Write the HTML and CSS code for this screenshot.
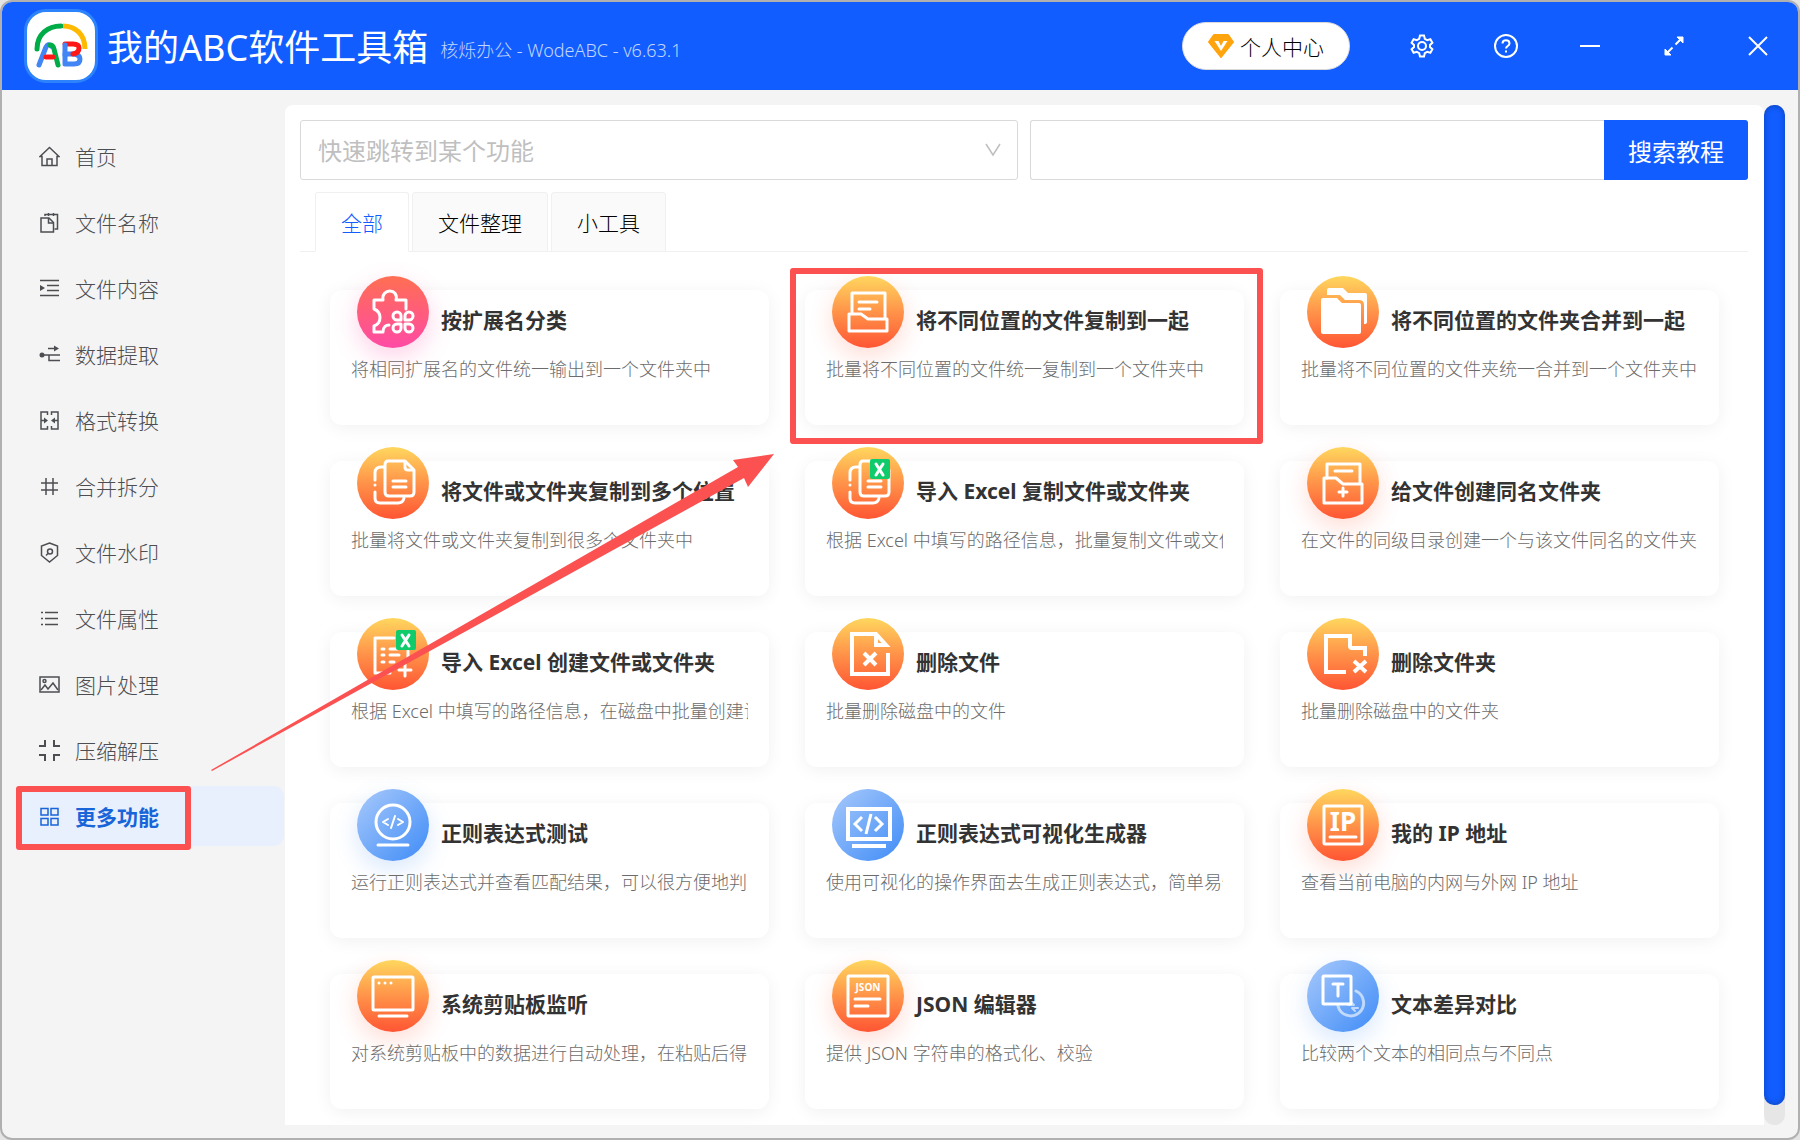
FILE: index.html
```html
<!DOCTYPE html>
<html lang="zh-CN">
<head>
    <meta charset="UTF-8">
    <meta name="viewport" content="width=device-width, initial-scale=1.0">
    <title>我的ABC软件工具箱</title>
    <link rel="stylesheet" href="styles.css">
</head>
<body>
<div class="window">
    <header class="titlebar">
        <div class="logo">
            <svg viewBox="0 0 68 68" fill="none" stroke-width="5" stroke-linecap="round" stroke-linejoin="round">
                <path d="M10 37C10 22 21 14 34 14" stroke="#00ac47"/>
                <path d="M36 14C48 14 58 22 58 37" stroke="#ffba00" stroke-linecap="butt"/>
                <path d="M12 53L19 35Q21 31 24 34" stroke="#4285f4"/>
                <path d="M23 33Q26 33 27 37L31 53" stroke="#00ac47"/>
                <path d="M19 45H26" stroke="#ff1717"/>
                <path d="M38 52V42L47 42Q53 43 53 47Q53 52 47 52Z" stroke="#4285f4"/>
                <path d="M38 32H46Q52 32 52 36Q52 41 46 42" stroke="#ff1717"/>
                <path d="M38 33V43" stroke="#4285f4"/>
            </svg>
        </div>
        <h1>我的ABC软件工具箱</h1>
        <span class="version">核烁办公 - WodeABC - v6.63.1</span>
        <button class="user-btn" type="button">
            <svg viewBox="0 0 26 24"><path d="M6 1H20L25 8L13 23L1 8Z" fill="#ffa40d" stroke="#ffa40d" stroke-width="2" stroke-linejoin="round"/><path d="M6.500 7H10.500L13 12L15.500 7H19.500L13 17Z" fill="#fff"/></svg>
            个人中心
        </button>
        <div class="window-btns">
            <button type="button" aria-label="设置">
                <svg viewBox="0 0 24 24"><path d="M10 1.500H14L14.800 4.800L17.200 6.200L20.400 5.200L22.400 8.700L20 11V13L22.400 15.300L20.400 18.800L17.200 17.800L14.800 19.200L14 22.500H10L9.200 19.200L6.800 17.800L3.600 18.800L1.600 15.300L4 13V11L1.600 8.700L3.600 5.200L6.800 6.200L9.200 4.800Z"/><circle cx="12" cy="12" r="4"/></svg>
            </button>
            <button type="button" aria-label="帮助">
                <svg viewBox="0 0 24 24"><circle cx="12" cy="12" r="11"/><path d="M8.500 9.500C8.500 5 15.500 5 15.500 9.500C15.500 12 12 12 12 14.500"/><path d="M12 16.500V18.500"/></svg>
            </button>
            <button type="button" aria-label="最小化">
                <svg viewBox="0 0 24 24"><path d="M2 12H22"/></svg>
            </button>
            <button type="button" aria-label="最大化">
                <svg viewBox="0 0 24 24"><path d="M13.500 10.500L19 5M10.500 13.500L5 19"/><path d="M15 3L21 3L21 9ZM3 15L3 21L9 21Z" fill="#fff" stroke-width="1"/></svg>
            </button>
            <button type="button" aria-label="关闭">
                <svg viewBox="0 0 24 24"><path d="M3 3L21 21M21 3L3 21"/></svg>
            </button>
        </div>
    </header>

    <div class="body">
        <nav class="sidebar">
            <a href="#"><svg viewBox="0 0 21 21"><path d="M1 10.500L10.500 1.500L20 10.500H18V19.500H3V10.500Z"/><path d="M8 19.500V13H13V19.500"/></svg>首页</a>
            <a href="#"><svg viewBox="0 0 21 21"><path d="M2 6H10L14.500 10.500V20H2Z"/><path d="M9.500 6V11H14.500"/><path d="M6 4V2.500H18.500V17H15.500M9.500 1V4M14.500 1V4"/></svg>文件名称</a>
            <a href="#"><svg viewBox="0 0 21 21"><path d="M1 2.500H20M8 7.500H20M8 12.500H20M1 17.500H20"/><path class="solid" d="M1 7L6 10L1 13Z"/></svg>文件内容</a>
            <a href="#"><svg viewBox="0 0 21 21"><path d="M9 4.500H17M3 11H21M10 11V16.500H21"/><circle class="solid" cx="3" cy="11" r="2.500"/><path class="solid" d="M15 1.500L20 4.500L15 7.500Z"/></svg>数据提取</a>
            <a href="#"><svg viewBox="0 0 21 21"><path d="M8.500 5V2H2V19H8.500V16M12.500 5V2H19V19H12.500V16M2 10.500H6M15 10.500H19"/><path class="solid" d="M5 7.500L9 10.500L5 13.500ZM16 7.500L12 10.500L16 13.500Z"/></svg>格式转换</a>
            <a href="#"><svg viewBox="0 0 21 21"><path d="M7 2V19M14 2V19M2 7H19M2 14H19"/></svg>合并拆分</a>
            <a href="#"><svg viewBox="0 0 21 21"><path d="M10.500 1L18.500 4V13.500L10.500 20L2.500 13.500V4Z"/><circle cx="11" cy="9.500" r="2.500"/><path d="M9 11.500L7 13.500"/></svg>文件水印</a>
            <a href="#"><svg viewBox="0 0 21 21"><path d="M6 4.500H19M6 10.500H19M6 16.500H19M2 4.500H4M2 10.500H4M2 16.500H4"/></svg>文件属性</a>
            <a href="#"><svg viewBox="0 0 21 21"><path d="M1 3H20V18H1Z"/><circle cx="5.500" cy="7" r="1.500"/><path d="M2 16L6 11L9 15L14 9L19 16"/></svg>图片处理</a>
            <a href="#"><svg class="thick" viewBox="0 0 21 21"><path d="M0 6H6V0M21 6H15V0M0 15H6V21M21 15H15V21"/></svg>压缩解压</a>
            <a href="#" class="active"><svg viewBox="0 0 21 21"><path d="M2 2.500H9V9H2ZM12 2.500H19V9H12ZM2 12.500H9V19H2ZM12 12.500H19V19H12Z"/></svg>更多功能<span class="mark"></span></a>
        </nav>

        <main class="panel">
            <div class="search-row">
                <div class="select-box">
                    <select aria-label="快速跳转到某个功能">
                        <option>快速跳转到某个功能</option>
                    </select>
                    <svg viewBox="0 0 16 16"><path d="M1 2L8 13L15 2"/></svg>
                </div>
                <form class="search-box">
                    <input type="text" aria-label="搜索教程">
                    <button type="button">搜索教程</button>
                </form>
            </div>

            <div class="tabs">
                <button type="button" class="tab current">全部</button>
                <button type="button" class="tab">文件整理</button>
                <button type="button" class="tab">小工具</button>
            </div>

            <div class="cards">
                <a href="#" class="card">
                    <div class="card-head">
                        <span class="icon pink glow"><svg viewBox="0 0 72 72"><path d="M49 33V24H39C42 12 24 12 26 24H17V33C25 36 25 47 17 50V56H26C26 51 29 49 32 49"/><path d="M44 44H40A4 4 0 1 1 44 40ZM48 44V40A4 4 0 1 1 52 44ZM44 48V52A4 4 0 1 1 40 48ZM48 48H52A4 4 0 1 1 48 52Z"/></svg></span>
                        <h3>按扩展名分类</h3>
                    </div>
                    <p>将相同扩展名的文件统一输出到一个文件夹中</p>
                </a>
                <a href="#" class="card">
                    <div class="card-head">
                        <span class="icon orange glow"><svg viewBox="0 0 72 72"><path d="M20 37V17H53V42"/><path d="M27 26H45M27 33H38"/><path d="M17 38H29L36 43H55V55H17Z"/></svg></span>
                        <h3>将不同位置的文件复制到一起</h3>
                    </div>
                    <p>批量将不同位置的文件统一复制到一个文件夹中</p>
                    <span class="mark"></span>
                </a>
                <a href="#" class="card">
                    <div class="card-head">
                        <span class="icon orange"><svg class="fill" viewBox="0 0 72 72"><path d="M20 19V14Q20 12 22 12H36L41 17H58Q60 17 60 19V46Q60 48 57 48V29Q57 24 52 24H38L33 19Z"/><path d="M16 22H30L35 27H52Q54 27 54 29V56Q54 58 52 58H16Q14 58 14 56V24Q14 22 16 22Z"/></svg></span>
                        <h3>将不同位置的文件夹合并到一起</h3>
                    </div>
                    <p>批量将不同位置的文件夹统一合并到一个文件夹中</p>
                </a>

                <a href="#" class="card">
                    <div class="card-head">
                        <span class="icon orange"><svg viewBox="0 0 72 72"><path d="M31 14H48L57 23V45Q57 49 53 49H32Q28 49 28 45V18Q28 14 31 14Z"/><path d="M48 15V20Q48 23 51 23H56"/><path d="M36 34H49M36 40H49"/><path d="M27 20H24Q18 20 18 26V33M18 38V38M18 45V51Q18 56 23 56H41Q46 56 47 51"/></svg></span>
                        <h3>将文件或文件夹复制到多个位置</h3>
                    </div>
                    <p>批量将文件或文件夹复制到很多个文件夹中</p>
                </a>
                <a href="#" class="card">
                    <div class="card-head">
                        <span class="icon orange"><svg viewBox="0 0 72 72"><path d="M31 14H48L57 23V45Q57 49 53 49H32Q28 49 28 45V18Q28 14 31 14Z"/><path d="M36 34H49M36 40H49"/><path d="M27 20H24Q18 20 18 26V33M18 38V38M18 45V51Q18 56 23 56H41Q46 56 47 51"/><rect class="excel" x="38" y="12" width="20" height="20" rx="2"/><path d="M44 17L51 28M51 17L44 28"/></svg></span>
                        <h3>导入 Excel 复制文件或文件夹</h3>
                    </div>
                    <p>根据 Excel 中填写的路径信息，批量复制文件或文件夹</p>
                </a>
                <a href="#" class="card">
                    <div class="card-head">
                        <span class="icon orange glow"><svg viewBox="0 0 72 72"><path d="M20 31V17H53V36"/><path d="M28 24H45"/><path d="M17 31H29L36 37H55V56H17Z"/><path d="M32 45H40M36 41V49"/></svg></span>
                        <h3>给文件创建同名文件夹</h3>
                    </div>
                    <p>在文件的同级目录创建一个与该文件同名的文件夹</p>
                </a>

                <a href="#" class="card">
                    <div class="card-head">
                        <span class="icon orange"><svg viewBox="0 0 72 72"><path d="M37 20H18V55H33M51 33V40"/><path d="M25 31H27M33 31H40M25 37H27M33 37H42M25 44H27M33 44H37"/><path d="M42 52H54M48 46V58"/><rect class="excel" x="39" y="12" width="20" height="20" rx="2"/><path d="M45 17L52 28M52 17L45 28"/></svg></span>
                        <h3>导入 Excel 创建文件或文件夹</h3>
                    </div>
                    <p>根据 Excel 中填写的路径信息，在磁盘中批量创建该文件</p>
                </a>
                <a href="#" class="card">
                    <div class="card-head">
                        <span class="icon orange"><svg class="sharp" viewBox="0 0 72 72"><path d="M56 35V56H20V16H44L54 27H44V17"/><path d="M32 35L44 47M44 35L32 47"/></svg></span>
                        <h3>删除文件</h3>
                    </div>
                    <p>批量删除磁盘中的文件</p>
                </a>
                <a href="#" class="card">
                    <div class="card-head">
                        <span class="icon orange"><svg class="sharp" viewBox="0 0 72 72"><path d="M39 54H19V18H43V28Q43 30 45 30H58V38"/><path d="M47 43L59 54M59 43L47 54"/></svg></span>
                        <h3>删除文件夹</h3>
                    </div>
                    <p>批量删除磁盘中的文件夹</p>
                </a>

                <a href="#" class="card">
                    <div class="card-head">
                        <span class="icon blue glow"><svg viewBox="0 0 72 72"><circle cx="36" cy="33" r="17"/><path class="thin" d="M31 30L26 33L31 36M41 30L46 33L41 36M38 27L34 39"/><path d="M21 56H51"/></svg></span>
                        <h3>正则表达式测试</h3>
                    </div>
                    <p>运行正则表达式并查看匹配结果，可以很方便地判断</p>
                </a>
                <a href="#" class="card">
                    <div class="card-head">
                        <span class="icon blue"><svg class="sharp" viewBox="0 0 72 72"><path d="M16 20H58V50H16Z"/><path class="medium" d="M30 28L23 35L30 42M43 28L50 35L43 42M39 25L34 45"/><path d="M20 57H54"/></svg></span>
                        <h3>正则表达式可视化生成器</h3>
                    </div>
                    <p>使用可视化的操作界面去生成正则表达式，简单易懂</p>
                </a>
                <a href="#" class="card">
                    <div class="card-head">
                        <span class="icon orange glow"><svg viewBox="0 0 72 72"><rect x="17" y="17" width="38" height="38" rx="1"/><text x="36" y="42" font-size="26">IP</text><path d="M23 48H49"/></svg></span>
                        <h3>我的 IP 地址</h3>
                    </div>
                    <p>查看当前电脑的内网与外网 IP 地址</p>
                </a>

                <a href="#" class="card">
                    <div class="card-head">
                        <span class="icon orange glow"><svg viewBox="0 0 72 72"><rect x="16" y="17" width="40" height="33" rx="1"/><path d="M22 23V23M28 23V23M34 23V23"/><path d="M22 56H50"/></svg></span>
                        <h3>系统剪贴板监听</h3>
                    </div>
                    <p>对系统剪贴板中的数据进行自动处理，在粘贴后得到</p>
                </a>
                <a href="#" class="card">
                    <div class="card-head">
                        <span class="icon orange glow"><svg viewBox="0 0 72 72"><rect x="16" y="16" width="40" height="40" rx="1"/><text x="36" y="31" font-size="10">JSON</text><path d="M23 39H48M23 46H36"/></svg></span>
                        <h3>JSON 编辑器</h3>
                    </div>
                    <p>提供 JSON 字符串的格式化、校验</p>
                </a>
                <a href="#" class="card">
                    <div class="card-head">
                        <span class="icon blue glow"><svg viewBox="0 0 72 72"><g class="pale"><path d="M49 31A13 13 0 1 1 31 46"/><path class="thin" d="M41 45H47L44 42M51 48H45L48 51"/></g><rect x="16" y="16" width="28" height="28" rx="1"/><path d="M26 24H36M31 24V36"/></svg></span>
                        <h3>文本差异对比</h3>
                    </div>
                    <p>比较两个文本的相同点与不同点</p>
                </a>
            </div>
        </main>

        <div class="scrollbar"><div class="thumb"></div></div>
    </div>

    <svg class="arrow" viewBox="0 0 566 318"><path d="M0 317L527 14L522 7L563 1L537 34L533 25L1 318Z"/></svg>
</div>
</body>
</html>
```

FILE: styles.css
```css
* {
    box-sizing: border-box;
}
body {
    margin: 0;
    background-color: #e4e4e4;
    font-family: "Noto Sans", "Noto Sans CJK SC", sans-serif;
    font-size: 21px;
    font-weight: 300;
    color: #222;
}
button, input, select {
    font-family: inherit;
    font-size: inherit;
    font-weight: inherit;
    margin: 0;
}
button {
    cursor: pointer;
}
a {
    color: inherit;
    text-decoration: none;
}
.window {
    position: relative;
    display: flex;
    flex-direction: column;
    min-height: 100vh;
    border: 2px solid #b0b0b0;
    border-radius: 12px;
    background-color: #f4f4f4;
    overflow: hidden;
}

/* title bar */
.titlebar {
    display: flex;
    align-items: center;
    height: 88px;
    padding: 0 28px 0 22px;
    background-color: #115dff;
    color: #fff;
}
.logo {
    width: 74px;
    height: 74px;
    border: 3px solid #2d83fb;
    border-radius: 22px;
    background-color: #fff;
}
.logo svg {
    display: block;
}
.titlebar h1 {
    margin: 0 12px 0 9px;
    padding-top: 3px;
    font-size: 36px;
    font-weight: 400;
    line-height: 48px;
    white-space: nowrap;
}
.version {
    padding-top: 6px;
    font-size: 18px;
    color: rgba(255, 255, 255, 0.75);
    white-space: nowrap;
}
.user-btn {
    display: flex;
    align-items: center;
    justify-content: center;
    gap: 6px;
    width: 168px;
    height: 48px;
    margin-left: auto;
    padding: 0;
    border: 1px solid #d9d9d9;
    border-radius: 24px;
    background-color: #fff;
    color: #000;
    white-space: nowrap;
}
.user-btn svg {
    width: 26px;
    height: 24px;
}
.window-btns {
    display: flex;
    gap: 60px;
    margin-left: 60px;
}
.window-btns button {
    width: 24px;
    height: 24px;
    padding: 0;
    border: 0;
    background: none;
}
.window-btns svg {
    display: block;
    fill: none;
    stroke: #fff;
    stroke-width: 2;
}

/* layout */
.body {
    display: flex;
    flex-grow: 1;
    padding: 15px 13px 13px 0;
}
.sidebar {
    display: flex;
    flex-direction: column;
    flex-shrink: 0;
    gap: 6px;
    width: 283px;
    padding: 21px 1px 0 14px;
}
.sidebar a {
    position: relative;
    display: flex;
    align-items: center;
    gap: 15px;
    height: 60px;
    padding-left: 23px;
    border-radius: 10px;
    color: #4c4e52;
}
.sidebar svg {
    width: 21px;
    height: 21px;
    fill: none;
    stroke: currentColor;
    stroke-width: 1.5;
}
.sidebar .thick {
    stroke-width: 2;
}
.sidebar .solid {
    fill: currentColor;
    stroke: none;
}
.sidebar .active {
    background-color: #e8effd;
    color: #1765d8;
    font-weight: 700;
}
.panel {
    flex-grow: 1;
    min-width: 0;
    padding: 15px 16px 16px 15px;
    border-radius: 8px 8px 0 0;
    background-color: #fff;
}
.scrollbar {
    flex-shrink: 0;
    width: 21px;
    border-radius: 10px;
    background-color: #e6e6e6;
}
.thumb {
    height: 98%;
    border-radius: 10px;
    background-color: #115dff;
    box-shadow: inset 0 0 6px rgba(0, 0, 0, 0.3);
}

/* search */
.search-row {
    display: grid;
    grid-template-columns: 1fr 1fr;
    gap: 12px;
}
.select-box {
    position: relative;
}
.select-box select {
    display: block;
    width: 100%;
    height: 60px;
    padding: 0 17px;
    border: 1px solid #d9d9d9;
    border-radius: 3px;
    background-color: #fff;
    color: #bfbfbf;
    font-size: 24px;
    font-weight: 400;
    appearance: none;
}
.select-box svg {
    position: absolute;
    top: 22px;
    right: 17px;
    width: 16px;
    height: 16px;
    fill: none;
    stroke: #bfbfbf;
    stroke-width: 1.5;
    pointer-events: none;
}
.search-box {
    display: flex;
}
.search-box input {
    flex-grow: 1;
    min-width: 0;
    height: 60px;
    padding: 0 16px;
    border: 1px solid #d9d9d9;
    border-right: 0;
    border-radius: 3px 0 0 3px;
    font-size: 24px;
}
.search-box button {
    width: 144px;
    padding: 0;
    border: 0;
    border-radius: 0 3px 3px 0;
    background-color: #115dff;
    color: #fff;
    font-size: 24px;
    font-weight: 400;
}

/* tabs */
.tabs {
    display: flex;
    gap: 3px;
    margin-top: 12px;
    padding-left: 15px;
    border-bottom: 1px solid #f0f0f0;
}
.tab {
    height: 60px;
    margin-bottom: -1px;
    padding: 0 25px;
    border: 1px solid #f0f0f0;
    border-radius: 3px 3px 0 0;
    background-color: #fafafa;
    color: #000;
}
.tab.current {
    border-bottom-color: #fff;
    background-color: #fff;
    color: #115dff;
}

/* cards */
.cards {
    display: grid;
    grid-template-columns: repeat(3, 1fr);
    gap: 36px;
    padding: 38px 29px 0 30px;
}
.card {
    position: relative;
    min-width: 0;
    height: 135px;
    padding: 0 21px;
    border-radius: 12px;
    background-color: #fff;
    box-shadow: 0 3px 18px rgba(0, 0, 0, 0.06);
}
.card-head {
    display: flex;
    align-items: flex-end;
    gap: 12px;
    margin-top: -14px;
    padding-left: 6px;
}
.card h3 {
    margin: 0 0 12px;
    font-size: 21px;
    font-weight: 700;
    line-height: 32px;
    color: #333;
    white-space: nowrap;
}
.card p {
    margin: 7px 0 0;
    font-size: 18px;
    line-height: 28px;
    color: #6c6c6c;
    white-space: nowrap;
    overflow: hidden;
}
.icon {
    flex-shrink: 0;
    width: 72px;
    height: 72px;
    border-radius: 50%;
}
.icon.pink {
    background: linear-gradient(#ff6f52, #ff4aa5);
}
.icon.orange {
    background: linear-gradient(#ffd75e, #ff9349 50%, #ff5533);
}
.icon.blue {
    background: linear-gradient(135deg, #a8c9fb, #3f8cf7);
}
.icon.glow {
    box-shadow: 0 9px 24px rgba(255, 85, 51, 0.2);
}
.icon.pink.glow {
    box-shadow: 0 9px 24px rgba(255, 74, 165, 0.25);
}
.icon.blue.glow {
    box-shadow: 0 9px 24px rgba(63, 140, 247, 0.2);
}
.icon svg {
    display: block;
    fill: none;
    stroke: #fff;
    stroke-width: 3;
    stroke-linecap: round;
    stroke-linejoin: round;
}
.icon .sharp {
    stroke-width: 4;
    stroke-linecap: butt;
    stroke-linejoin: miter;
}
.icon .fill {
    fill: #fff;
    stroke: none;
}
.icon .thin {
    stroke-width: 2;
}
.icon .medium {
    stroke-width: 3;
}
.icon .pale {
    opacity: 0.6;
}
.icon .excel {
    fill: #0fcb6b;
    stroke: none;
}
.icon text {
    fill: #fff;
    stroke: none;
    font-weight: 700;
    text-anchor: middle;
}

/* red marks over the page */
.mark {
    position: absolute;
    border: 6px solid #fb5151;
    border-radius: 3px;
    pointer-events: none;
}
.sidebar .mark {
    top: 0;
    left: 0;
    width: 175px;
    height: 64px;
}
.card .mark {
    inset: -22px -19px -19px -15px;
}
.arrow {
    position: absolute;
    left: 209px;
    top: 451px;
    width: 566px;
    height: 318px;
    fill: #fb5151;
    pointer-events: none;
}
```
